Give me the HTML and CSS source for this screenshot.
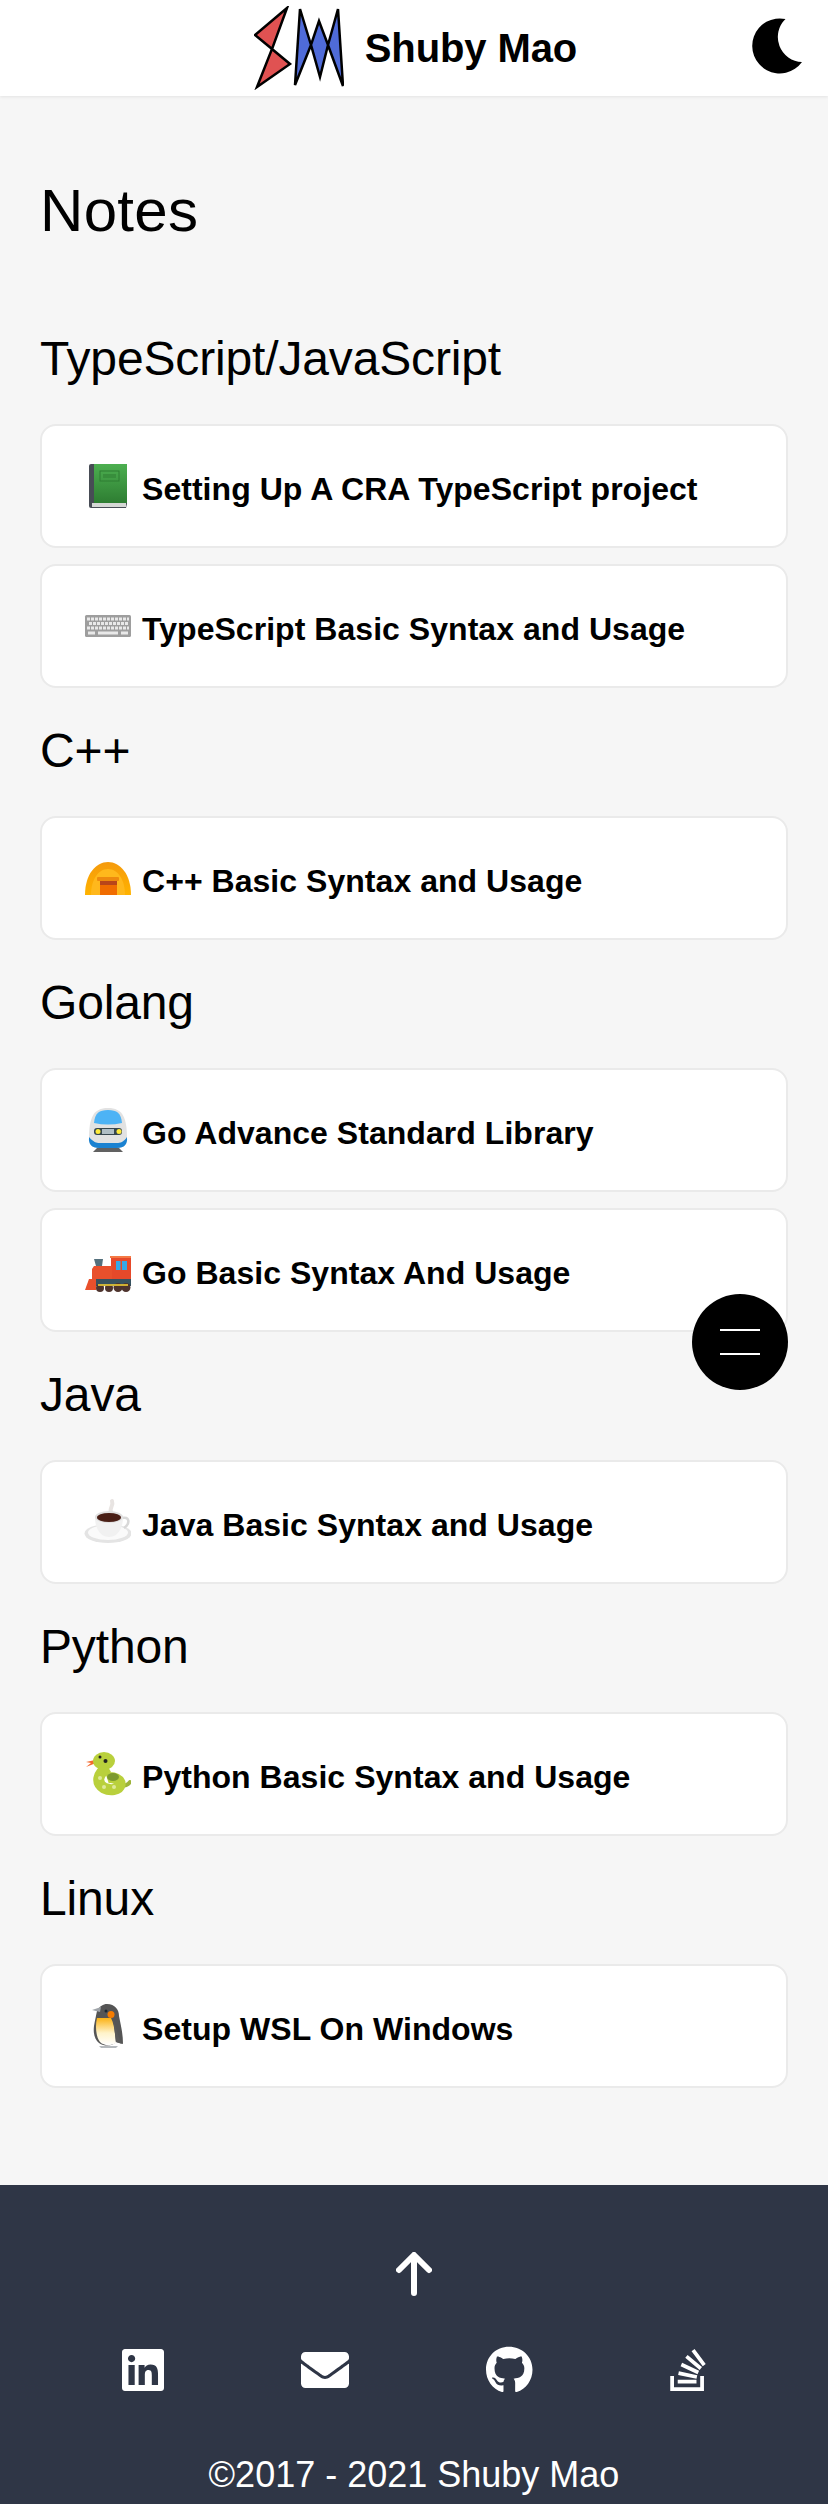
FILE: index.html
```html
<!DOCTYPE html>
<html lang="en">
<head>
<meta charset="utf-8">
<title>Notes - Shuby Mao</title>
<link rel="stylesheet" href="styles.css">
</head>
<body>
<header class="topbar">
  <a class="brand" href="#">
    <svg class="logo" viewBox="0 0 90 84" aria-hidden="true">
      <path class="logo-red" d="M33 2 1 29 18 43 3 81 36 58 18 43Z"/>
      <path class="logo-blue" d="M46 3 57 39 65 15 74 39 84 3 89 80 74 39 66 71 57 39 41 79Z"/>
    </svg>
    <span class="brand-name">Shuby Mao</span>
  </a>
  <button class="theme-toggle" aria-label="Toggle theme">
    <svg class="moon" viewBox="0 0 52 56" aria-hidden="true"><path d="M33.500 1A27.500 27.500 0 1 0 50 44 25 25 0 0 1 33.500 1z"/></svg>
  </button>
</header>

<main class="content">
  <h1 class="page-title">Notes</h1>

  <section>
    <h2 class="group-title group-first">TypeScript/JavaScript</h2>
    <a class="note-card" href="#">
      <svg class="emoji" viewBox="0 0 48 48" aria-hidden="true">
        <defs><linearGradient id="bookG" x1="0" y1="0" x2="0" y2="1"><stop offset="0" stop-color="#4caf50"/><stop offset="1" stop-color="#2e7d32"/></linearGradient></defs>
        <path d="M8 2H44V42L43 46H8Q6 46 6 44V4Q6 2 8 2Z" fill="#474c55"/>
        <path d="M9 41H43V45H9Z" fill="#d5d8d5"/>
        <rect x="11" y="2" width="33" height="39" fill="url(#bookG)"/>
        <rect x="17" y="9" width="19" height="10" fill="none" stroke="#2e7d32" stroke-width="1"/>
        <rect x="20" y="12" width="13" height="4" fill="#388e3c"/>
      </svg>
      <span class="note-text">Setting Up A CRA TypeScript project</span>
    </a>
    <a class="note-card" href="#">
      <svg class="emoji" viewBox="0 0 48 48" aria-hidden="true">
        <rect x="2" y="13" width="46" height="22" rx="1.500" fill="#9e9e9e"/>
        <g fill="none" stroke="#e9e9e9" stroke-width="3">
          <path d="M4 17H46" stroke-dasharray="3 1"/>
          <path d="M6 21.500H46" stroke-dasharray="3 1"/>
          <path d="M4 26H46" stroke-dasharray="3 1"/>
          <path d="M5 31H12M15 31H35M38 31H45"/>
        </g>
      </svg>
      <span class="note-text">TypeScript Basic Syntax and Usage</span>
    </a>
  </section>
  <section>
    <h2 class="group-title">C++</h2>
    <a class="note-card" href="#">
      <svg class="emoji" viewBox="0 0 48 48" aria-hidden="true">
        <defs><linearGradient id="tentG" x1="0" y1="0" x2="0" y2="1"><stop offset="0" stop-color="#f59a0c"/><stop offset="1" stop-color="#ffb300"/></linearGradient></defs>
        <path d="M2 41C2 20 13 8 25 8S48 20 48 41Z" fill="url(#tentG)"/>
        <path d="M8 41C8 26 15 15 25 15S42 26 42 41Z" fill="#ffb81c"/>
        <rect x="17" y="26" width="17" height="15" fill="#f06c00"/>
        <rect x="17" y="27" width="17" height="4" fill="#b8451a"/>
        <rect x="14" y="23" width="22" height="4" rx="1" fill="#ee8a0e"/>
      </svg>
      <span class="note-text">C++ Basic Syntax and Usage</span>
    </a>
  </section>
  <section>
    <h2 class="group-title">Golang</h2>
    <a class="note-card" href="#">
      <svg class="emoji" viewBox="0 0 48 48" aria-hidden="true">
        <path d="M10 46 16 40H34L40 46Z" fill="#616161"/>
        <path d="M6 33C6 12 10 2 25 2S44 12 44 33Q44 42 34 42H16Q6 42 6 33Z" fill="#e2e2e2"/>
        <path d="M6 31C10 36 14 37 16 37H34C37 37 41 36 44 31Q45 42 34 42H16Q5 42 6 31Z" fill="#1b82d1"/>
        <path d="M11 17C12 7 16 4 25 4S38 7 39 17Q25 20 11 17Z" fill="#4db3f5"/>
        <rect x="11" y="22" width="28" height="7" rx="3" fill="#37474f"/>
        <rect x="19" y="23" width="12" height="5" fill="#b0bec5"/>
        <circle cx="15" cy="25.500" r="2.500" fill="#ffeb3b"/>
        <circle cx="36" cy="25.500" r="2.500" fill="#ffeb3b"/>
      </svg>
      <span class="note-text">Go Advance Standard Library</span>
    </a>
    <a class="note-card" href="#">
      <svg class="emoji" viewBox="0 0 48 48" aria-hidden="true">
        <path d="M11 13H20L19 20H13Z" fill="#54707d"/>
        <rect x="28" y="11" width="20" height="22" fill="#e6492a"/>
        <rect x="27" y="10" width="22" height="2" fill="#f47a45"/>
        <rect x="33" y="15" width="4.500" height="9" fill="#35a8e8"/>
        <rect x="39" y="15" width="5" height="9" fill="#35a8e8"/>
        <path d="M11 20H29V33H9V23Z" fill="#e9502c"/>
        <path d="M6 33H13V44H2Z" fill="#e9502c"/>
        <rect x="13" y="33" width="35" height="7" fill="#37525f"/>
        <g fill="#4e342e"><circle cx="17" cy="42" r="4"/><circle cx="26" cy="42" r="4"/><circle cx="35" cy="41.500" r="4.500"/><circle cx="43" cy="41.500" r="4.500"/></g>
        <path d="M15 39H45" stroke="#fdd835" stroke-width="1.500"/>
      </svg>
      <span class="note-text">Go Basic Syntax And Usage</span>
    </a>
  </section>
  <section>
    <h2 class="group-title">Java</h2>
    <a class="note-card" href="#">
      <svg class="emoji" viewBox="0 0 48 48" aria-hidden="true">
        <path d="M28 14C26 10 31 8 29 3" fill="none" stroke="#e8e4e2" stroke-width="4" stroke-linecap="round"/>
        <ellipse cx="25" cy="35.500" rx="23.500" ry="9.500" fill="#e4e4e4"/>
        <ellipse cx="25" cy="34.500" rx="20" ry="7.500" fill="#fafafa"/>
        <path d="M39 20C46 18 48 25 41 30" fill="none" stroke="#d8d8d8" stroke-width="2.500"/>
        <path d="M12 19C12 30 17 39 26 39S40 30 40 19Z" fill="#f1f1f1"/>
        <ellipse cx="26" cy="19" rx="14" ry="6" fill="#e0e0e0"/>
        <ellipse cx="26" cy="19.500" rx="12" ry="4.500" fill="#4a1f16"/>
      </svg>
      <span class="note-text">Java Basic Syntax and Usage</span>
    </a>
  </section>
  <section>
    <h2 class="group-title">Python</h2>
    <a class="note-card" href="#">
      <svg class="emoji" viewBox="0 0 48 48" aria-hidden="true">
        <path d="M13 13 3 17 8 13 3 12 12 10Z" fill="#f4692e"/>
        <path d="M47 32C44 37 38 36 35 36" fill="none" stroke="#9db33a" stroke-width="4" stroke-linecap="round"/>
        <path d="M25 17C14 24 13 33 21 38C27 41 36 40 37 35C38 30 30 26 24 28" fill="none" stroke="#b9d03c" stroke-width="11"/>
        <ellipse cx="21" cy="11" rx="11" ry="9" fill="#b9d03c"/>
        <ellipse cx="30" cy="27" rx="6" ry="4" fill="#7c9a2e"/>
        <g fill="#dfe99a"><circle cx="17" cy="28" r="2"/><circle cx="21" cy="37" r="2"/><circle cx="31" cy="37" r="2"/></g>
        <circle cx="17" cy="7" r="1.500" fill="#222"/>
        <circle cx="22.500" cy="11" r="2" fill="#222"/>
      </svg>
      <span class="note-text">Python Basic Syntax and Usage</span>
    </a>
  </section>
  <section>
    <h2 class="group-title">Linux</h2>
    <a class="note-card" href="#">
      <svg class="emoji" viewBox="0 0 48 48" aria-hidden="true">
        <defs><linearGradient id="penG" x1="0" y1="0" x2="0" y2="1"><stop offset="0" stop-color="#fbb215"/><stop offset="0.55" stop-color="#fff3c9"/><stop offset="1" stop-color="#fff"/></linearGradient></defs>
        <path d="M16 44H35L33 46H18Z" fill="#b5b9bd"/>
        <path d="M24 2C32 2 36 8 36 14C38 24 40 32 40 42L33 40C30 44 22 45 16 41C12 38 10 32 11 24C12 18 13 14 14 9C17 4 20 2 24 2Z" fill="#555"/>
        <path d="M9 8 18 5 17 10Z" fill="#9ea3a8"/>
        <path d="M14 16H28C32 24 32 34 33 41C28 44 21 44 17 40C13 35 12 24 14 16Z" fill="url(#penG)"/>
        <circle cx="28" cy="12.500" r="3.500" fill="#f57c00"/>
        <circle cx="23" cy="9" r="1.500" fill="#1a2733"/>
        <path d="M30 16C33 24 34 33 39 42L33 40C32 32 31 24 30 16Z" fill="#5a5a5a"/>
      </svg>
      <span class="note-text">Setup WSL On Windows</span>
    </a>
  </section>
</main>

<button class="fab" aria-label="Open menu"><i class="fab-line"></i><i class="fab-line"></i></button>

<footer class="footer">
  <a class="to-top" href="#" aria-label="Back to top">
    <svg class="arrow" viewBox="0 0 36 44" aria-hidden="true"><path d="M18 41V4M3 18 18 3 33 18"/></svg>
  </a>
  <nav class="socials">
    <a href="#" aria-label="LinkedIn"><svg class="social" viewBox="0 0 448 512"><path d="M416 32H31.900C14.300 32 0 46.500 0 64.300v383.400C0 465.500 14.300 480 31.900 480H416c17.600 0 32-14.500 32-32.300V64.300c0-17.800-14.400-32.300-32-32.300zM135.400 416H69V202.200h66.500V416zm-33.200-243c-21.300 0-38.500-17.300-38.500-38.500S80.900 96 102.200 96c21.200 0 38.500 17.300 38.500 38.500 0 21.300-17.200 38.500-38.500 38.500zm282.100 243h-66.400V312c0-24.800-.5-56.700-34.500-56.700-34.600 0-39.900 27-39.900 54.900V416h-66.400V202.200h63.700v29.200h.9c8.900-16.800 30.600-34.500 62.900-34.500 67.200 0 79.700 44.300 79.700 101.900V416z"/></svg></a>
    <a href="#" aria-label="Email"><svg class="social" viewBox="0 0 512 512"><path d="M502.300 190.800c3.900-3.100 9.700-.2 9.700 4.700V400c0 26.500-21.500 48-48 48H48c-26.500 0-48-21.500-48-48V195.600c0-5 5.700-7.800 9.700-4.700 22.400 17.400 52.100 39.500 154.100 113.600 21.100 15.400 56.700 47.800 92.200 47.600 35.700.3 72-32.800 92.300-47.600 102-74.100 131.600-96.300 154-113.700zM256 320c23.200.4 56.600-29.200 73.400-41.400 132.700-96.300 142.800-104.700 173.400-128.700 5.800-4.500 9.200-11.500 9.200-18.900v-19c0-26.500-21.500-48-48-48H48C21.500 64 0 85.500 0 112v19c0 7.400 3.400 14.300 9.200 18.900 30.600 23.900 40.700 32.400 173.400 128.700 16.800 12.200 50.200 41.800 73.400 41.400z"/></svg></a>
    <a href="#" aria-label="GitHub"><svg class="social" viewBox="0 0 496 512"><path d="M244.800 8C106.100 8 0 113.300 0 252c0 110.900 69.800 205.800 169.500 239.200 12.800 2.300 17.300-5.600 17.300-12.100 0-6.200-.3-40.400-.3-61.400 0 0-70 15-84.700-29.800 0 0-11.400-29.100-27.800-36.600 0 0-22.900-15.700 1.600-15.400 0 0 24.900 2 38.600 25.800 21.900 38.600 58.600 27.500 72.900 20.900 2.300-16 8.800-27.100 16-33.700-55.900-6.200-112.300-14.300-112.300-110.500 0-27.500 7.600-41.300 23.600-58.900-2.600-6.500-11.100-33.300 2.600-67.900 20.900-6.500 69 27 69 27 20-5.600 41.500-8.500 62.800-8.500s42.800 2.900 62.800 8.500c0 0 48.100-33.600 69-27 13.700 34.700 5.200 61.400 2.600 67.900 16 17.700 25.800 31.500 25.800 58.900 0 96.500-58.900 104.200-114.800 110.500 9.200 7.900 17 22.900 17 46.400 0 33.700-.3 75.400-.3 83.600 0 6.500 4.600 14.400 17.300 12.100C428.200 457.800 496 362.900 496 252 496 113.300 383.500 8 244.800 8z"/></svg></a>
    <a href="#" aria-label="Stack Overflow"><svg class="social" viewBox="0 0 384 512"><path d="M290.700 311L95 269.700 86.800 309l195.700 41zm51-87L188.200 95.700l-25.500 30.800 153.500 128.300zm-31.200 39.700L129.200 179l-16.700 36.500L293.700 300zM262 32l-32 24 119.300 160.300 32-24zm20.500 328h-200v39.700h200zm39.700 80H42.700V320h-40v160h359.500V320h-40z"/></svg></a>
  </nav>
  <p class="copyright">©2017 - 2021 Shuby Mao</p>
</footer>
</body>
</html>
```

FILE: styles.css
```css
* { box-sizing: border-box; }

html, body { margin: 0; padding: 0; }

body {
  background: #f6f6f6;
  color: #000;
  font-family: "Liberation Sans", Arial, sans-serif;
}

a { color: inherit; text-decoration: none; }

.topbar {
  position: relative;
  height: 96px;
  background: #fff;
  box-shadow: 0 1px 3px rgba(0, 0, 0, 0.08);
  display: flex;
  justify-content: center;
  align-items: center;
  padding-left: 3px;
}

.brand { display: flex; align-items: center; gap: 21px; }

.logo { width: 90px; height: 84px; display: block; }
.logo path { stroke: #000; stroke-width: 2.500; stroke-linejoin: miter; }
.logo-red { fill: #e05252; }
.logo-blue { fill: #4f6bd8; }

.brand-name { font-size: 40px; font-weight: 700; letter-spacing: -0.1px; }

.theme-toggle {
  position: absolute;
  right: 24px;
  top: 18px;
  padding: 0;
  border: 0;
  background: none;
}

.moon { display: block; width: 52px; height: 56px; fill: #000; }

.content { padding: 72px 40px 81px; }

.page-title {
  margin: 0;
  font-size: 60px;
  font-weight: 400;
  line-height: 86px;
  letter-spacing: 0.3px;
}

.group-title {
  margin: 0;
  padding: 19px 0 38px;
  font-size: 48px;
  font-weight: 400;
  line-height: 55px;
  letter-spacing: -0.15px;
}

.group-first { padding-top: 77px; }

.note-card {
  display: flex;
  align-items: center;
  gap: 11px;
  height: 124px;
  margin-bottom: 16px;
  padding: 0 41px;
  background: #fff;
  border: 2px solid #eaeaea;
  border-radius: 16px;
  font-size: 32px;
  font-weight: 700;
}

.emoji { display: block; flex: none; width: 48px; height: 48px; }

.note-text { padding-top: 7px; letter-spacing: 0.04px; }

.fab {
  position: fixed;
  top: 1294px;
  right: 40px;
  width: 96px;
  height: 96px;
  padding: 0;
  border: 0;
  border-radius: 50%;
  background: #000;
  display: flex;
  flex-direction: column;
  justify-content: center;
  align-items: center;
  gap: 22px;
}

.fab-line { display: block; width: 40px; height: 2px; background: #fff; }

.footer {
  height: 319px;
  background: #2f3646;
  color: #fff;
  padding-top: 67px;
  display: flex;
  flex-direction: column;
  align-items: center;
}

.to-top { display: block; height: 44px; }
.arrow { display: block; width: 36px; height: 44px; fill: none; stroke: #fff; stroke-width: 6; stroke-linecap: round; stroke-linejoin: round; }

.socials {
  align-self: stretch;
  margin-top: 50px;
  padding: 0 54px;
  display: flex;
  justify-content: space-around;
}

.socials a { display: block; height: 48px; }
.social { display: block; height: 48px; fill: #fff; }

.copyright {
  margin: 58px 0 0;
  font-size: 36px;
  line-height: 46px;
}
```
